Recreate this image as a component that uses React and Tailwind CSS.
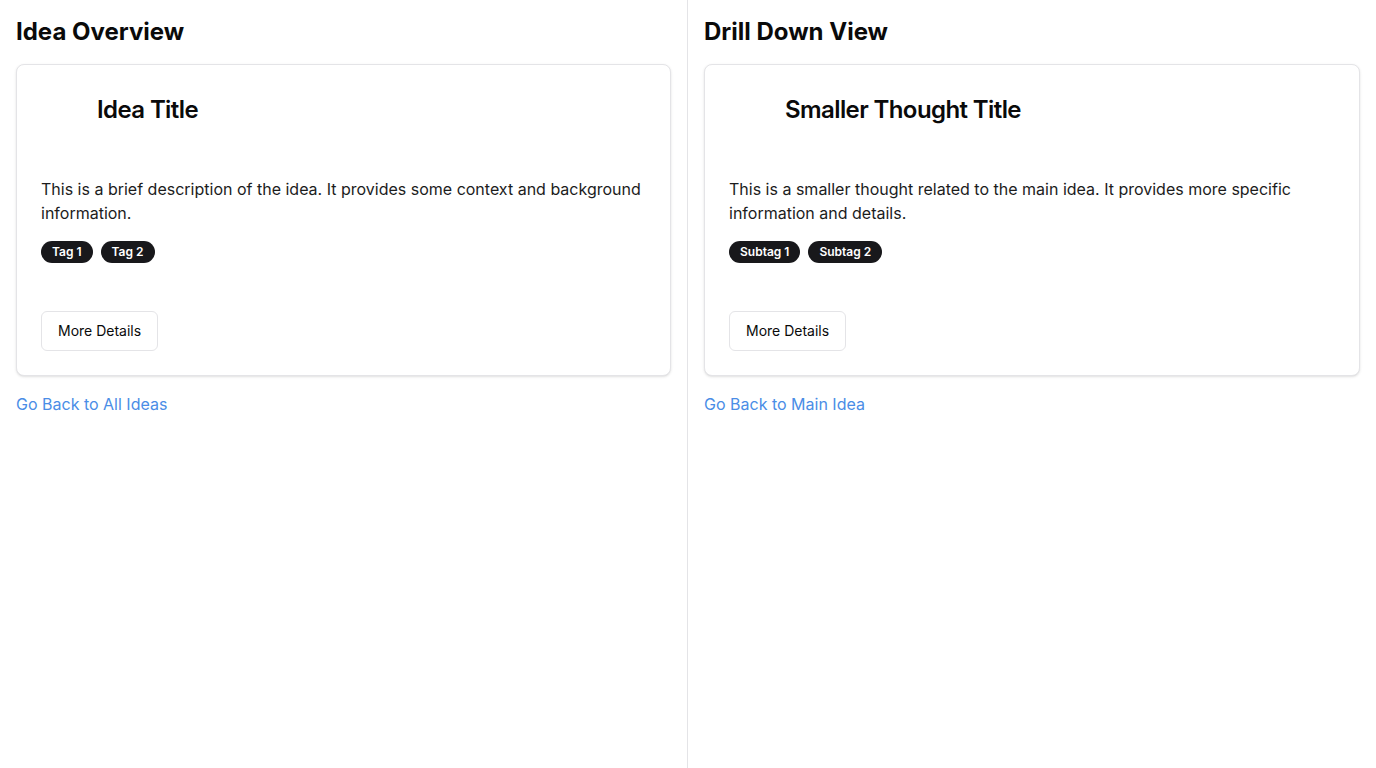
import { useState } from "react";

const panels = [
  {
    heading: "Idea Overview",
    title: "Idea Title",
    description:
      "This is a brief description of the idea. It provides some context and background information.",
    tags: ["Tag 1", "Tag 2"],
    back: "Go Back to All Ideas",
  },
  {
    heading: "Drill Down View",
    title: "Smaller Thought Title",
    description:
      "This is a smaller thought related to the main idea. It provides more specific information and details.",
    tags: ["Subtag 1", "Subtag 2"],
    back: "Go Back to Main Idea",
  },
];

function IdeaCard({ item }) {
  return (
    <div className="rounded-lg border border-[#e4e4e7] bg-white shadow-sm">
      <div className="flex items-center gap-4 p-6">
        {/* avatar slot, empty in the view */}
        <div className="h-10 w-10 shrink-0" />
        <h3 className="pt-0.5 text-2xl font-semibold tracking-tight text-[#0a0a0a]">
          {item.title}
        </h3>
      </div>
      <div className="p-6">
        <p className="text-base text-[#1c1c1c]">{item.description}</p>
        <div className="mt-4 flex gap-2">
          {item.tags.map((tag) => (
            <span
              key={tag}
              className="rounded-full border border-transparent bg-[#18181b] px-2.5 py-0.5 text-xs font-semibold text-white"
            >
              {tag}
            </span>
          ))}
        </div>
      </div>
      <div className="p-6">
        <button className="h-10 rounded-md border border-[#e4e4e7] bg-white px-4 text-sm font-normal text-[#0a0a0a]">
          More Details
        </button>
      </div>
    </div>
  );
}

export default function App() {
  const [active] = useState(0);
  return (
    <div
      className="grid min-h-screen grid-cols-2 bg-white"
      style={{ fontFamily: "Inter, 'Noto Sans', sans-serif" }}
    >
      {panels.map((item, i) => (
        <div
          key={item.heading}
          className={i === 0 ? "border-r border-[#e4e4e7] p-4" : "p-4"}
          data-active={i === active}
        >
          <h2 className="mb-4 text-2xl font-bold text-[#0a0a0a]">
            {item.heading}
          </h2>
          <IdeaCard item={item} />
          <a href="#" className="mt-4 block text-base text-[#4a8de6]">
            {item.back}
          </a>
        </div>
      ))}
    </div>
  );
}
